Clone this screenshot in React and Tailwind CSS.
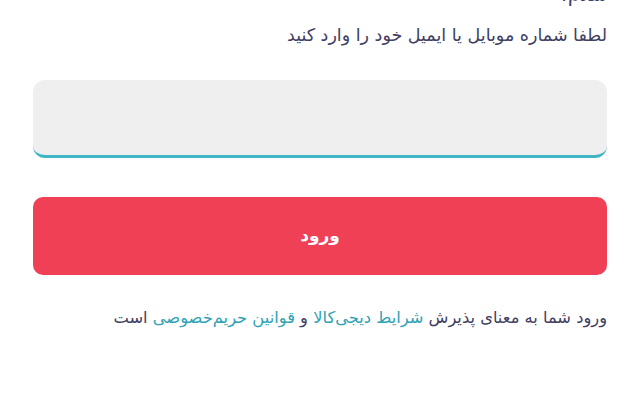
export default function App() {
  return (
    <div
      dir="rtl"
      className="w-[640px] h-[400px] bg-white overflow-hidden px-[33px] text-[#3f4064]"
      style={{ fontFamily: '"DejaVu Sans", "Noto Sans", sans-serif' }}
    >
      {/* cut-off heading */}
      <div className="h-[10px] overflow-hidden relative">
        <p className="absolute right-0 -top-[19px] text-[19px] leading-[26px]">سلام!</p>
      </div>

      <p className="mt-[13px] text-[17.5px] leading-[24px]">لطفا شماره موبایل یا ایمیل خود را وارد کنید</p>

      <div className="mt-[33px] h-[78px] rounded-[12px] bg-[#efefef] border-b-[3px] border-[#3fb6c6]">
        <input className="w-full h-full bg-transparent outline-none px-4 text-[15px]" aria-label="phone" />
      </div>

      <button className="mt-[39px] w-full h-[78px] rounded-[10px] bg-[#ef4056] text-white text-[17px] font-semibold flex items-center justify-center">
        ورود
      </button>

      <p className="mt-[31px] text-[16.3px] leading-[24px]">
        ورود شما به معنای پذیرش{' '}
        <span className="text-[#2ea2b3]">شرایط دیجی‌کالا</span> و{' '}
        <span className="text-[#2ea2b3]">قوانین حریم‌خصوصی</span> است
      </p>
    </div>
  )
}
